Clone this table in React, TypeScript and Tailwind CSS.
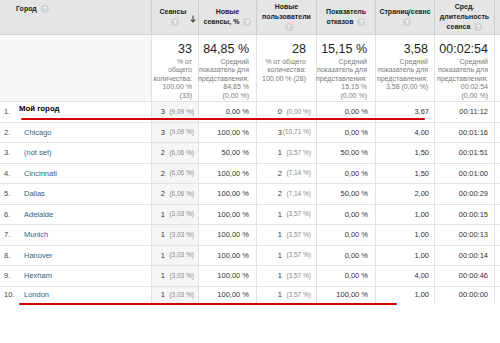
import React from "react";

type Row = {
  n: number;
  city: string;
  own?: boolean;
  s: string;
  sp: string;
  ns: string;
  u: string;
  up: string;
  b: string;
  p: string;
  d: string;
};

const rows: Row[] = [
  { n: 1, city: "Мой город", own: true, s: "3", sp: "(9,09 %)", ns: "0,00 %", u: "0", up: "(0,00 %)", b: "0,00 %", p: "3,67", d: "00:11:12" },
  { n: 2, city: "Chicago", s: "3", sp: "(9,09 %)", ns: "100,00 %", u: "3", up: "(10,71 %)", b: "0,00 %", p: "4,00", d: "00:01:16" },
  { n: 3, city: "(not set)", s: "2", sp: "(6,06 %)", ns: "50,00 %", u: "1", up: "(3,57 %)", b: "50,00 %", p: "1,50", d: "00:01:51" },
  { n: 4, city: "Cincinnati", s: "2", sp: "(6,06 %)", ns: "100,00 %", u: "2", up: "(7,14 %)", b: "0,00 %", p: "1,50", d: "00:01:00" },
  { n: 5, city: "Dallas", s: "2", sp: "(6,06 %)", ns: "100,00 %", u: "2", up: "(7,14 %)", b: "50,00 %", p: "2,00", d: "00:00:29" },
  { n: 6, city: "Adelaide", s: "1", sp: "(3,03 %)", ns: "100,00 %", u: "1", up: "(3,57 %)", b: "0,00 %", p: "1,00", d: "00:00:15" },
  { n: 7, city: "Munich", s: "1", sp: "(3,03 %)", ns: "100,00 %", u: "1", up: "(3,57 %)", b: "0,00 %", p: "1,00", d: "00:00:13" },
  { n: 8, city: "Hanover", s: "1", sp: "(3,03 %)", ns: "100,00 %", u: "1", up: "(3,57 %)", b: "0,00 %", p: "1,00", d: "00:00:14" },
  { n: 9, city: "Hexham", s: "1", sp: "(3,03 %)", ns: "100,00 %", u: "1", up: "(3,57 %)", b: "0,00 %", p: "4,00", d: "00:00:46" },
  { n: 10, city: "London", s: "1", sp: "(3,03 %)", ns: "100,00 %", u: "1", up: "(3,57 %)", b: "100,00 %", p: "1,00", d: "00:00:00" },
];

const grid = "grid grid-cols-[152px_47px_58px_60px_59px_59px_60px_40px]";

function Help() {
  return (
    <span className="inline-flex items-center justify-center w-[8px] h-[8px] rounded-full bg-[#d2d2d2] text-white text-[6px] font-bold leading-none align-middle ml-[4px]">
      ?
    </span>
  );
}

function Head({ lines, last }: { lines: string[]; last?: boolean }) {
  return (
    <div className="flex flex-col items-center justify-center text-center border-r border-[#cfcfcf] px-[2px] leading-[10px]">
      {lines.map((l, i) => (
        <div key={i} className="whitespace-nowrap">
          {l}
          {last && i === lines.length - 1 ? <Help /> : null}
        </div>
      ))}
      {!last ? (
        <div>
          <Help />
        </div>
      ) : null}
    </div>
  );
}

function Summary({ big, lines, pr = "pr-[7px]" }: { big: string; lines: string[]; pr?: string }) {
  return (
    <div className={`border-r border-b border-[#e2e2e2] flex flex-col items-end pt-[8px] ${pr}`}>
      <div className="text-[12.5px] leading-[13px] text-[#222] whitespace-nowrap">{big}</div>
      <div className="flex flex-col items-end text-[7px] leading-[8.4px] text-[#7a7a7a] mt-[2px]">
        {lines.map((l, i) => (
          <div key={i} className="whitespace-nowrap">
            {l}
          </div>
        ))}
      </div>
    </div>
  );
}

const cell = "border-r border-[#e2e2e2] flex items-center justify-end text-[7.5px] text-[#333]";

export default function App() {
  return (
    <div className="relative w-[500px] h-[343px] overflow-hidden bg-white font-['Liberation_Sans',Arial,sans-serif]">
      {/* header */}
      <div className={`${grid} h-[35px] bg-[#e5e5e5] border-b border-[#d4d4d4] text-[7px] font-bold text-[#222]`}>
        <div className="border-r border-[#cfcfcf] pl-[16px] pt-[4px]">
          Город
          <Help />
        </div>
        <div className="relative flex flex-col items-center justify-center text-center border-r border-[#cfcfcf] leading-[10px] pr-[4px]">
          <div>Сеансы</div>
          <div>
            <Help />
          </div>
          <svg className="absolute right-[2px] top-[15px]" width="6" height="8" viewBox="0 0 6 8">
            <path d="M3 0.5V7M0.8 4.6L3 7L5.2 4.6" stroke="#444" strokeWidth="1.1" fill="none" />
          </svg>
        </div>
        <Head lines={["Новые", "сеансы, %"]} last />
        <Head lines={["Новые", "пользователи"]} />
        <Head lines={["Показатель", "отказов"]} last />
        <Head lines={["Страниц/сеанс"]} />
        <Head lines={["Сред.", "длительность", "сеанса"]} last />
        <div />
      </div>

      {/* summary */}
      <div className={`${grid} h-[67px]`}>
        <div className="bg-[#f8f8f8] border-r border-b border-[#e2e2e2]" />
        <Summary big="33" pr="pr-[6px]" lines={["% от", "общего", "количества:", "100,00 %", "(33)"]} />
        <Summary big="84,85 %" lines={["Средний", "показатель для", "представления:", "84,85 %", "(0,00 %)"]} />
        <Summary big="28" pr="pr-[10px]" lines={["% от общего", "количества:", "100,00 % (28)"]} />
        <Summary big="15,15 %" pr="pr-[8px]" lines={["Средний", "показатель для", "представления:", "15,15 %", "(0,00 %)"]} />
        <Summary big="3,58" pr="pr-[6px]" lines={["Средний", "показатель для", "представления:", "3,58 (0,00 %)"]} />
        <Summary big="00:02:54" pr="pr-[6px]" lines={["Средний", "показатель для", "представления:", "00:02:54", "(0,00 %)"]} />
        <div className="border-b border-[#e2e2e2]" />
      </div>

      {/* rows */}
      {rows.map((r) => {
        const bb = r.n === 10 ? "" : "border-b";
        return (
          <div key={r.n} className={`${grid} ${r.n === 10 ? "h-[16px]" : "h-[20.5px]"}`}>
            <div className={`border-r border-[#e2e2e2] flex items-center text-[7.5px] ${bb}`}>
              <span className="w-[19px] pl-[4px] text-[#444]">{r.n}.</span>
              {r.own ? (
                <span className="self-start pt-[1px] text-[7.8px] font-bold text-black">{r.city}</span>
              ) : (
                <span className="pl-[5px] text-[#2f5f84]">{r.city}</span>
              )}
            </div>
            <div className={`${cell} ${bb} bg-[#f6f6f6] pr-[4px]`}>
              <span>{r.s}</span>
              <span className="w-[29px] text-right text-[6.5px] text-[#888]">{r.sp}</span>
            </div>
            <div className={`${cell} ${bb} pr-[7px]`}>{r.ns}</div>
            <div className={`${cell} ${bb} pr-[5px]`}>
              <span>{r.u}</span>
              <span className="w-[29px] text-right text-[6.5px] text-[#888]">{r.up}</span>
            </div>
            <div className={`${cell} ${bb} pr-[7px]`}>{r.b}</div>
            <div className={`${cell} ${bb} pr-[5px]`}>{r.p}</div>
            <div className={`${cell} ${bb} pr-[6px]`}>{r.d}</div>
            <div className={`${bb} border-[#e2e2e2]`} />
          </div>
        );
      })}

      {/* red annotation lines */}
      <div className="absolute left-[21px] top-[118px] w-[404px] h-[2px] bg-[#d40000] rounded-full" />
      <div className="absolute left-[19px] top-[303px] w-[378px] h-[2px] bg-[#d40000] rounded-full" />
    </div>
  );
}
